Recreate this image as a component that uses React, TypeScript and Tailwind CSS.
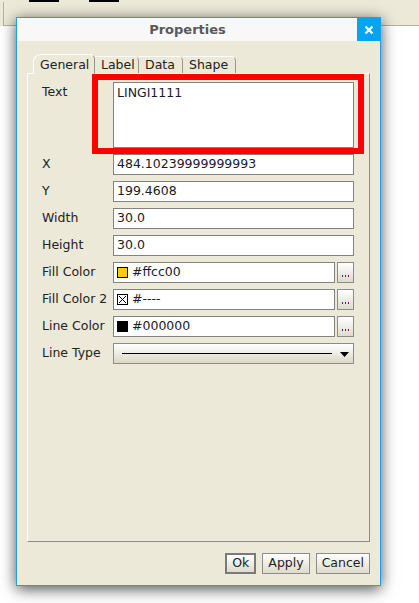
import React from "react";

const FONT = { fontFamily: '"DejaVu Sans", "Liberation Sans", sans-serif' };

function Row({ label, children }: { label: string; children: React.ReactNode }) {
  return (
    <div className="flex items-center h-[21px]">
      <div className="w-[71px] text-[12.5px] text-[#222] leading-none">{label}</div>
      <div className="flex-1 flex h-full">{children}</div>
    </div>
  );
}

function Input({ value }: { value: string }) {
  return (
    <div className="flex-1 h-full bg-white border border-[#828282] flex items-center pl-[3px] text-[12.5px] text-[#1a1a2a] leading-none">
      {value}
    </div>
  );
}

function Dots() {
  return (
    <div className="ml-[2px] w-[17px] h-full border border-[#8c8c8c] bg-gradient-to-b from-white to-[#dedbcb] flex items-end justify-center pb-[5px]">
      <div className="flex gap-[2px]">
        <div className="w-[1px] h-[2px] bg-[#800080]" />
        <div className="w-[1px] h-[2px] bg-[#800080]" />
        <div className="w-[1px] h-[2px] bg-[#800080]" />
      </div>
    </div>
  );
}

function ColorField({ swatch, value }: { swatch: React.ReactNode; value: string }) {
  return (
    <>
      <div className="flex-1 h-full bg-white border border-[#828282] flex items-center pl-[3px] text-[12.5px] text-[#1a1a2a] leading-none">
        {swatch}
        <span className="ml-[4px]">{value}</span>
      </div>
      <Dots />
    </>
  );
}

function Tab({ label, selected, w }: { label: string; selected?: boolean; w: string }) {
  return (
    <div
      className={
        "relative flex items-center text-[12.5px] text-[#222] leading-none border-r border-[#9a988c] rounded-tr-[5px] pl-[6px] " +
        w +
        " " +
        (selected
          ? "h-[20px] -mb-[1px] z-10 bg-[#ece9d8] border-l border-t border-l-white border-t-white rounded-tl-[8px] pt-[1px]"
          : "h-[17px] border-t border-t-white pt-[1px]")
      }
    >
      {label}
    </div>
  );
}

function Btn({ label, isDefault }: { label: string; isDefault?: boolean }) {
  return (
    <div
      className={
        "h-[21px] flex items-center justify-center text-[12.5px] text-[#222] leading-none bg-gradient-to-b from-white to-[#dedbcb] " +
        (isDefault ? "border-2 border-[#7a7a7a] px-[5px]" : "border border-[#8c8c8c] px-[5px]")
      }
    >
      {label}
    </div>
  );
}

export default function App() {
  return (
    <div className="relative w-[419px] h-[603px] bg-white overflow-hidden" style={FONT}>
      {/* background strip */}
      <div className="h-[26px] bg-[#ece9d8] flex flex-col">
        <div className="h-[2px] flex">
          <div className="ml-[29px] w-[30px] h-[2px] bg-black" />
          <div className="ml-[30px] w-[30px] h-[2px] bg-black" />
        </div>
        <div className="flex-1 ml-[3px] border-l border-b border-[#b4b1a3]" />
      </div>

      {/* dialog window */}
      <div className="absolute left-[16px] top-[17px] w-[365px] h-[569px] border border-[#19a1ea] bg-[#ece9d8] flex flex-col shadow-[0_3px_14px_rgba(0,0,0,0.7)]">
        <div className="h-[23px] bg-[#f8f8f9] flex items-stretch">
          <div className="flex-1 flex items-center justify-center text-[13px] font-bold text-[#595959] leading-none pl-[1px]">
            Properties
          </div>
          <div className="w-[23px] bg-[#05a3f0] flex items-center justify-center">
            <svg width="10" height="10" viewBox="0 0 10 10">
              <path d="M1.5 1.5 L8.5 8.5 M8.5 1.5 L1.5 8.5" stroke="white" strokeWidth="2.2" />
            </svg>
          </div>
        </div>

        <div className="flex-1 flex flex-col px-[10px] pt-[13px] pb-[11px]">
          <div className="h-[19px] flex items-end pl-[6px]">
            <Tab label="General" selected w="w-[62px]" />
            <Tab label="Label" w="w-[44px]" />
            <Tab label="Data" w="w-[44px]" />
            <Tab label="Shape" w="w-[53px]" />
          </div>
          <div className="flex-1 border-l border-t border-l-white border-t-white border-r border-b border-r-[#8c8c8c] border-b-[#8c8c8c] pl-[14px] pr-[15px] pt-[8px] flex flex-col gap-[6px]">
            <div className="flex">
              <div className="w-[71px] pt-[4px] text-[12.5px] text-[#222] leading-none">Text</div>
              <div className="flex-1 h-[66px] bg-white border border-[#828282] pl-[3px] pt-[4px] text-[12.5px] text-[#1a1a2a] leading-none">
                LINGI1111
              </div>
            </div>
            <Row label="X"><Input value="484.10239999999993" /></Row>
            <Row label="Y"><Input value="199.4608" /></Row>
            <Row label="Width"><Input value="30.0" /></Row>
            <Row label="Height"><Input value="30.0" /></Row>
            <Row label="Fill Color">
              <ColorField swatch={<div className="w-[11px] h-[11px] bg-[#ffcc00] border border-black" />} value="#ffcc00" />
            </Row>
            <Row label="Fill Color 2">
              <ColorField
                swatch={
                  <svg width="11" height="11" viewBox="0 0 11 11">
                    <rect x="0.5" y="0.5" width="10" height="10" fill="white" stroke="black" />
                    <path d="M2 2 L9 9 M9 2 L2 9" stroke="black" strokeWidth="1" />
                  </svg>
                }
                value="#----"
              />
            </Row>
            <Row label="Line Color">
              <ColorField swatch={<div className="w-[11px] h-[11px] bg-black border border-black" />} value="#000000" />
            </Row>
            <Row label="Line Type">
              <div className="flex-1 h-full border border-[#8c8c8c] bg-gradient-to-b from-white to-[#dcd8c5] flex items-center pl-[8px] pr-[4px]">
                <div className="flex-1 h-[1px] bg-black" />
                <svg width="9" height="5" viewBox="0 0 9 5" className="ml-[8px] mt-[1px]">
                  <path d="M0 0 H9 L4.5 5 Z" fill="black" />
                </svg>
              </div>
            </Row>
          </div>

          {/* overlay red highlight */}
          <div className="absolute left-[75px] top-[56px] w-[272px] h-[80px] border-[6px] border-[#ff0000] pointer-events-none" />

          <div className="mt-[11px] flex justify-end gap-[6px]">
            <Btn label="Ok" isDefault />
            <Btn label="Apply" />
            <Btn label="Cancel" />
          </div>
        </div>
      </div>
    </div>
  );
}
